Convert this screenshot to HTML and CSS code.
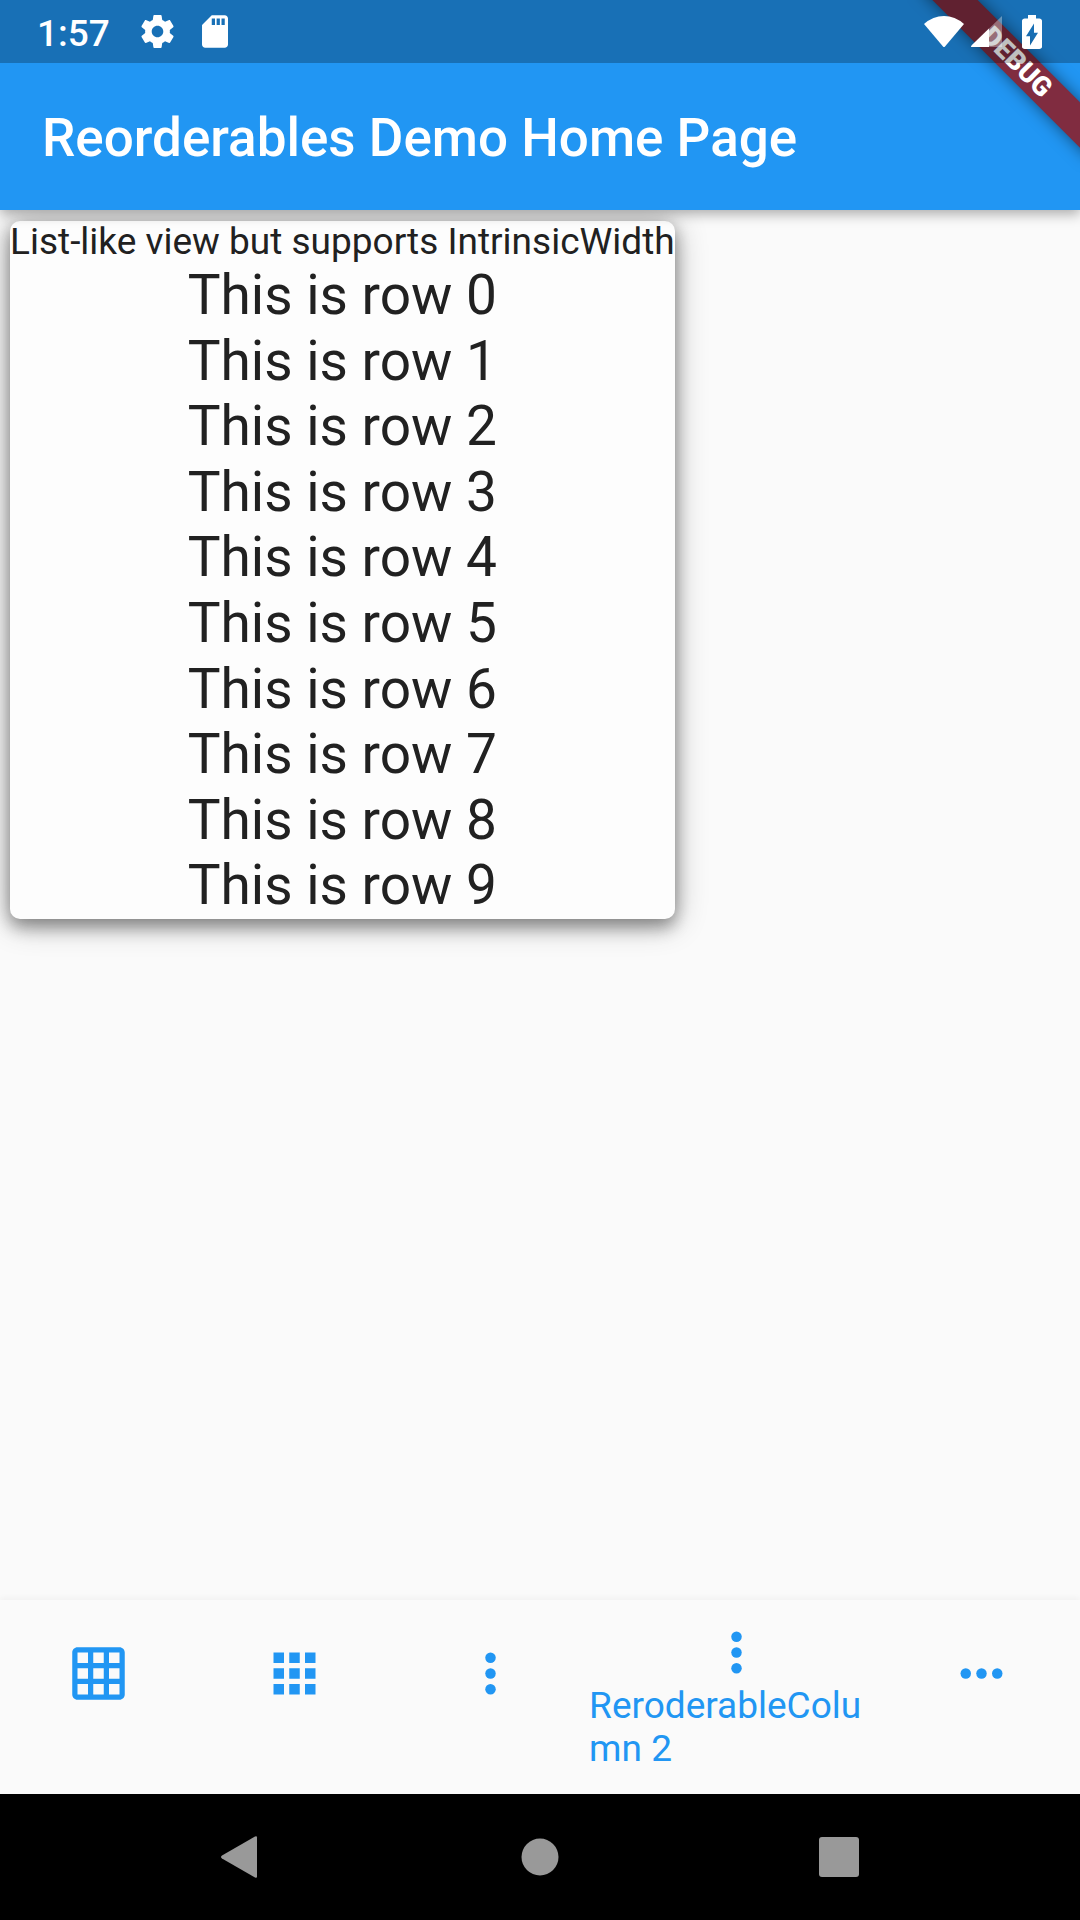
FILE: index.html
```html
<!DOCTYPE html>
<html lang="en">
<head>
<meta charset="utf-8">
<meta name="viewport" content="width=device-width, initial-scale=1">
<title>Reorderables Demo Home Page</title>
<link rel="stylesheet" href="styles.css">
</head>
<body>
<div class="screen">
  <header class="top">
    <div class="debug-clip"><div class="debug">DEBUG</div></div>
    <div class="status">
      <span class="time">1:57</span>
      <svg class="gear" viewBox="2 2 20 20" aria-hidden="true"><path d="M19.43 12.98c.04-.32.07-.64.07-.98s-.03-.66-.07-.98l2.11-1.65c.19-.15.24-.42.12-.64l-2-3.46c-.12-.22-.39-.3-.61-.22l-2.49 1c-.52-.4-1.08-.73-1.69-.98l-.38-2.65C14.46 2.18 14.25 2 14 2h-4c-.25 0-.46.18-.49.42l-.38 2.65c-.61.25-1.17.59-1.69.98l-2.49-1c-.23-.09-.49 0-.61.22l-2 3.46c-.13.22-.07.49.12.64l2.11 1.65c-.04.32-.07.65-.07.98s.03.66.07.98l-2.11 1.65c-.19.15-.24.42-.12.64l2 3.46c.12.22.39.3.61.22l2.49-1c.52.4 1.08.73 1.69.98l.38 2.65c.03.24.24.42.49.42h4c.25 0 .46-.18.49-.42l.38-2.65c.61-.25 1.17-.59 1.69-.98l2.49 1c.23.09.49 0 .61-.22l2-3.46c.12-.22.07-.49-.12-.64l-2.11-1.65zM12 15.5c-1.93 0-3.5-1.57-3.5-3.5s1.57-3.5 3.5-3.5 3.5 1.57 3.5 3.5-1.57 3.5-3.5 3.5z"/></svg>
      <svg class="card-icon" viewBox="4 2 16 20" aria-hidden="true"><path d="M18 2h-8L4.020 8 4 20c0 1.100.9 2 2 2h12c1.100 0 2-.9 2-2V4c0-1.100-.9-2-2-2zm-6 6h-2V4h2v4zm3 0h-2V4h2v4zm3 0h-2V4h2v4z"/></svg>
      <svg class="wifi" viewBox="0 0 40 31" aria-hidden="true"><path d="M0 8Q9 0 20 0T40 8L21 30.500Q20 31.500 19 30.500Z"/></svg>
      <svg class="signal" viewBox="0 0 31 31" aria-hidden="true"><path opacity=".35" d="M31 0V31H1Q-1 31 1 29Z"/><path d="M18 12.500V31H1Q-1 31 1 29Z"/></svg>
      <svg class="battery" viewBox="7 2 10 20" preserveAspectRatio="none" aria-hidden="true"><path d="M15.670 4H14V2h-4v2H8.330C7.600 4 7 4.600 7 5.330v15.330C7 21.400 7.600 22 8.330 22h7.330c.74 0 1.340-.6 1.340-1.330V5.330C17 4.600 16.400 4 15.670 4zM11 20v-5.500H9L13 7v5.500h2L11 20z"/></svg>
    </div>
    <h1 class="title">Reorderables Demo Home Page</h1>
  </header>
  <main class="body">
    <section class="card">
      <h2 class="card-title">List-like view but supports IntrinsicWidth</h2>
      <ul class="rows">
        <li>This is row 0</li>
        <li>This is row 1</li>
        <li>This is row 2</li>
        <li>This is row 3</li>
        <li>This is row 4</li>
        <li>This is row 5</li>
        <li>This is row 6</li>
        <li>This is row 7</li>
        <li>This is row 8</li>
        <li>This is row 9</li>
      </ul>
    </section>
  </main>
  <nav class="tabs">
    <button class="tab" type="button" aria-label="Table"><svg viewBox="0 0 24 24"><path d="M20 2H4c-1.100 0-2 .9-2 2v16c0 1.100.9 2 2 2h16c1.100 0 2-.9 2-2V4c0-1.100-.9-2-2-2zM8 20H4v-4h4v4zm0-6H4v-4h4v4zm0-6H4V4h4v4zm6 12h-4v-4h4v4zm0-6h-4v-4h4v4zm0-6h-4V4h4v4zm6 12h-4v-4h4v4zm0-6h-4v-4h4v4zm0-6h-4V4h4v4z"/></svg></button>
    <button class="tab" type="button" aria-label="Wrap"><svg viewBox="0 0 24 24"><path d="M4 8h4V4H4v4zm6 12h4v-4h-4v4zm-6 0h4v-4H4v4zm0-6h4v-4H4v4zm6 0h4v-4h-4v4zm6-10v4h4V4h-4zm-6 4h4V4h-4v4zm6 6h4v-4h-4v4zm0 6h4v-4h-4v4z"/></svg></button>
    <button class="tab" type="button" aria-label="Column 1"><svg viewBox="0 0 24 24"><circle cx="12" cy="6" r="2"/><circle cx="12" cy="12" r="2"/><circle cx="12" cy="18" r="2"/></svg></button>
    <button class="tab tab-active" type="button"><svg viewBox="0 0 24 24" aria-hidden="true"><circle cx="12" cy="6" r="2"/><circle cx="12" cy="12" r="2"/><circle cx="12" cy="18" r="2"/></svg><span class="tab-label">ReroderableColumn 2</span></button>
    <button class="tab" type="button" aria-label="Row"><svg viewBox="0 0 24 24"><circle cx="6" cy="12" r="2"/><circle cx="12" cy="12" r="2"/><circle cx="18" cy="12" r="2"/></svg></button>
  </nav>
  <div class="system">
    <button type="button" aria-label="Back"><svg viewBox="0 0 42 42"><path d="M37 1.500V40.500Q37 42.500 35 41.500L2 22.500Q0 21 2 19.500L35 .5Q37-.5 37 1.500Z"/></svg></button>
    <button type="button" aria-label="Home"><svg viewBox="0 0 42 42"><circle cx="21" cy="21" r="18.500"/></svg></button>
    <button type="button" aria-label="Overview"><svg viewBox="0 0 42 42"><rect x="1" y="1" width="40" height="40" rx="3"/></svg></button>
  </div>
</div>
</body>
</html>
```
FILE: styles.css
```css
* { box-sizing: border-box; }

body {
  margin: 0;
  background: #fafafa;
  font-family: Roboto, sans-serif;
  color: #212121;
}

.screen {
  display: flex;
  flex-direction: column;
  min-height: 100vh;
}

button {
  border: 0;
  padding: 0;
  background: none;
  font: inherit;
  color: inherit;
  cursor: pointer;
}

svg { display: block; flex: none; fill: currentColor; }

/* App bar with the translucent status bar on top */
.top {
  position: relative;
  z-index: 1;
  background: #2196f3;
  color: #fff;
  box-shadow: 0 4px 12px rgba(0, 0, 0, .32);
}

.status {
  position: relative;
  display: flex;
  align-items: center;
  height: 63px;
  padding: 0 38px 0 37px;
  background: rgba(0, 0, 0, .25);
}

.time { font-size: 37px; font-weight: 500; line-height: 63px; padding-top: 3px; }
.gear { width: 33px; height: 33px; margin-left: 31px; }
.card-icon { width: 26px; height: 33px; margin-left: 28px; }
.wifi { width: 40px; height: 31px; margin-left: auto; }
.signal { width: 31px; height: 31px; margin-left: 7px; }
.battery { width: 20px; height: 34px; margin-left: 20px; }

.title {
  margin: 0;
  padding: 44px 42px 41px;
  font-size: 53px;
  font-weight: 500;
  line-height: 62px;
}

/* Corner ribbon, drawn beneath the status bar */
.debug-clip {
  position: absolute;
  top: 0;
  right: 0;
  width: 210px;
  height: 210px;
  overflow: hidden;
}

.debug {
  position: absolute;
  top: 46px;
  right: -57px;
  width: 240px;
  height: 32px;
  background: #802c40;
  box-shadow: 0 0 16px rgba(0, 0, 0, .5);
  transform: rotate(45deg);
  text-align: center;
  font-size: 27px;
  font-weight: 900;
  line-height: 32px;
}

.body { flex: 1; padding: 11px 10px; }

.card {
  width: fit-content;
  background: #fdfdfd;
  border-radius: 10px;
  box-shadow: 0 10px 16px rgba(0, 0, 0, .24), 0 4px 32px rgba(0, 0, 0, .3), 0 2px 16px rgba(0, 0, 0, .16);
}

.card-title {
  margin: 0;
  font-size: 37px;
  font-weight: 400;
  line-height: 42px;
}

/* Rows share the list's height evenly */
.rows {
  display: grid;
  grid-auto-rows: 1fr;
  min-height: 656px;
  margin: 0;
  padding: 0;
  list-style: none;
  text-align: center;
  font-size: 55px;
  line-height: 64px;
}

.tabs {
  display: flex;
  min-height: 194px;
  background: #fafafa;
  box-shadow: 0 -2px 6px rgba(0, 0, 0, .04);
  color: #2196f3;
}

.tab {
  flex: 2 1 0;
  display: flex;
  flex-direction: column;
  align-items: center;
  padding-top: 42px;
}

.tab svg { width: 63px; height: 63px; }

.tab-active { flex-grow: 3; padding-top: 21px; }

.tab-label {
  font-size: 37px;
  line-height: 43px;
  text-align: left;
  word-break: break-all;
}

.system {
  display: flex;
  justify-content: center;
  height: 126px;
  background: #000;
  color: #999;
}

.system button {
  flex: 0 1 299px;
  display: flex;
  align-items: center;
  justify-content: center;
}

.system svg { width: 42px; height: 42px; }
```
